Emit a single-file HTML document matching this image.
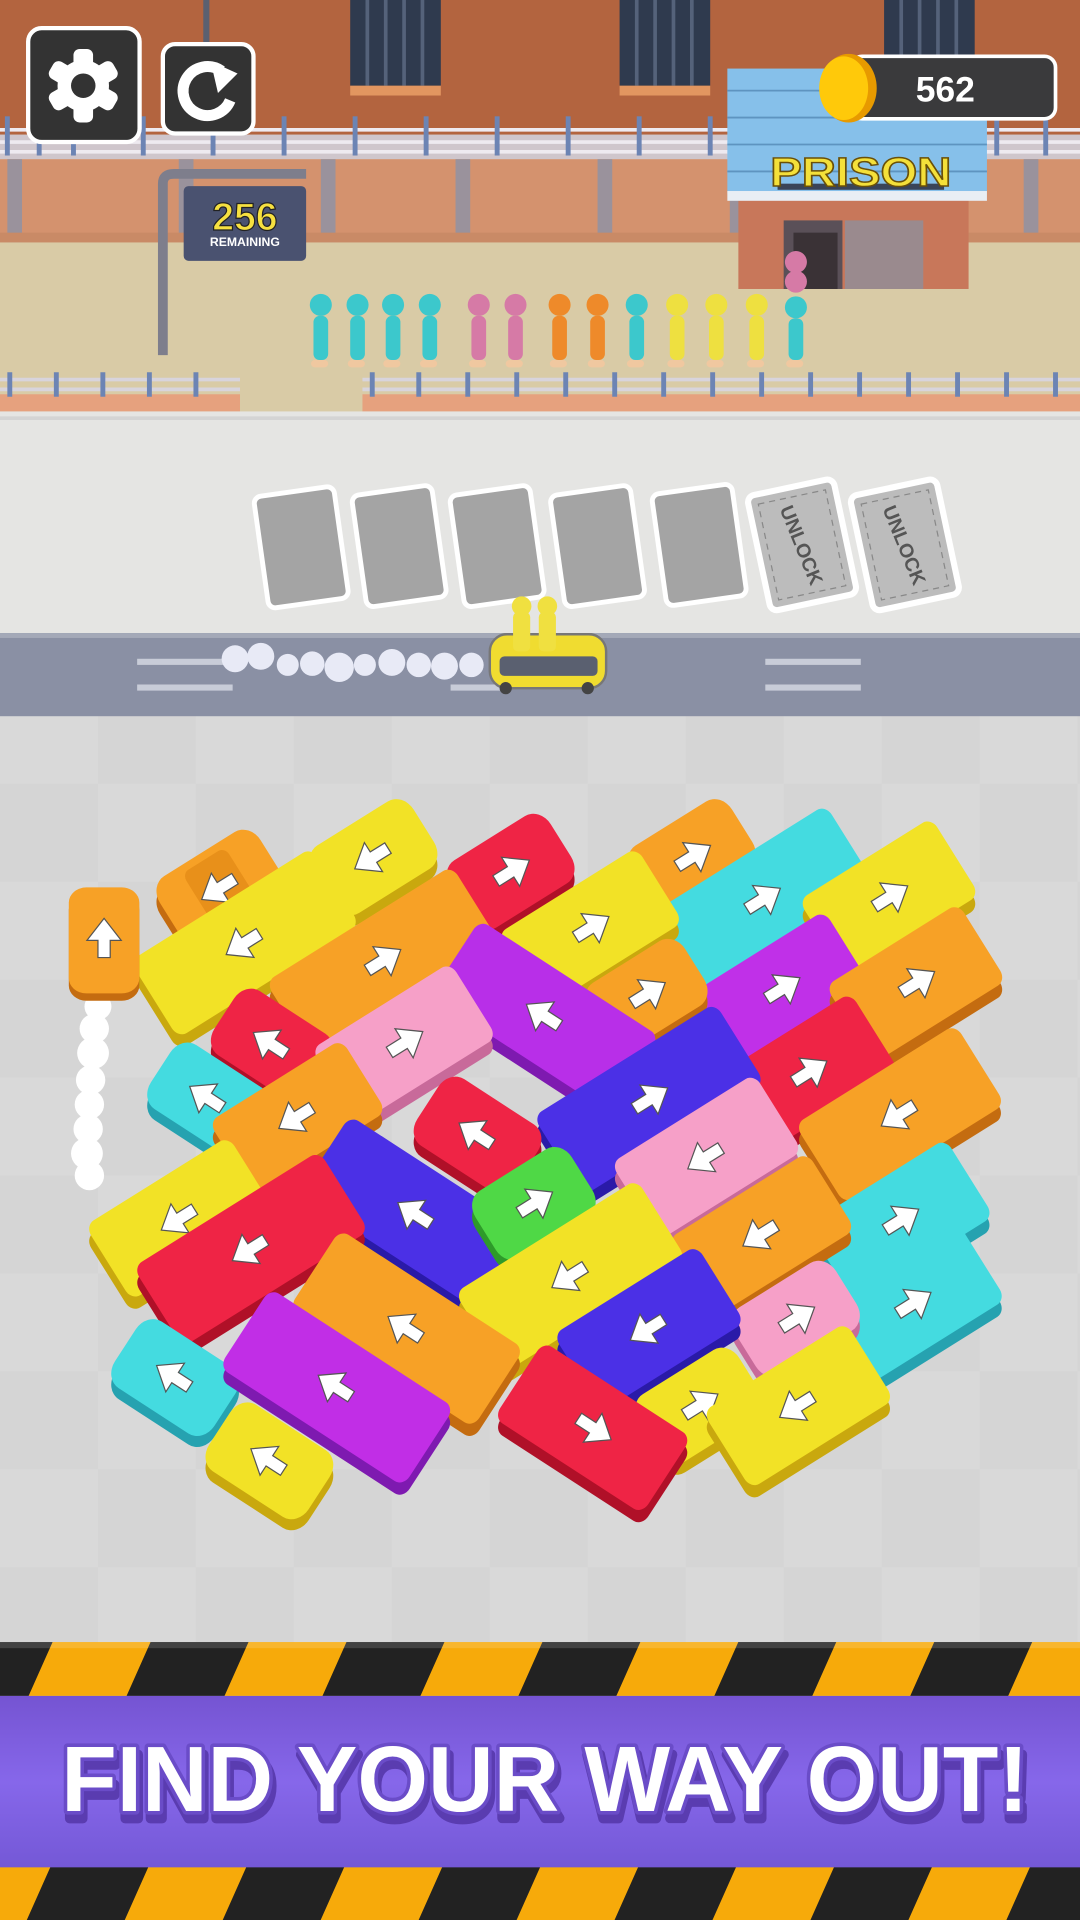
<!DOCTYPE html>
<html><head><meta charset="utf-8"><style>
html,body{margin:0;padding:0;width:1080px;height:1920px;overflow:hidden;background:#d8d8d8}
svg{display:block}
#cars rect{transform:scale(1.03,1.2)}
</style></head><body>
<svg width="1080" height="1920" viewBox="0 0 882 1568" preserveAspectRatio="none" xmlns="http://www.w3.org/2000/svg">
<defs>
<pattern id="haz" width="160" height="60" patternUnits="userSpaceOnUse" patternTransform="skewX(-24)">
<rect width="80" height="60" fill="#f7aa0a"/><rect x="80" width="80" height="60" fill="#222"/>
</pattern>
<pattern id="chk" width="160" height="160" patternUnits="userSpaceOnUse">
<rect width="160" height="160" fill="#d9d9d9"/><rect width="80" height="80" fill="#d5d5d5"/><rect x="80" y="80" width="80" height="80" fill="#d5d5d5"/>
</pattern>
<linearGradient id="pur" x1="0" y1="0" x2="0" y2="1"><stop offset="0" stop-color="#7554d2"/><stop offset="0.5" stop-color="#8667ea"/><stop offset="1" stop-color="#7458d6"/></linearGradient>
<path id="ar" d="M-14,-5h14v-9l18,14-18,14v-9h-14z" fill="#fff" stroke="#555" stroke-width="1"/>
</defs>

<rect x="0" y="0" width="882" height="110" fill="#b3643f"/>
<g fill="#2f3a4e"><rect x="286" y="0" width="74" height="70"/><rect x="506" y="0" width="74" height="70"/><rect x="722" y="0" width="74" height="70"/></g>
<g stroke="#55627a" stroke-width="3"><path d="M300,0v70M315,0v70M330,0v70M345,0v70M520,0v70M535,0v70M550,0v70M565,0v70M736,0v70M751,0v70M766,0v70M781,0v70"/></g>
<g fill="#e29660"><rect x="286" y="70" width="74" height="8"/><rect x="506" y="70" width="74" height="8"/><rect x="722" y="70" width="74" height="8"/></g>
<rect x="166" y="0" width="5" height="120" fill="#5a6070"/>
<rect x="0" y="110" width="882" height="20" fill="#cfc6cc"/>
<g stroke="#eeeaf0" stroke-width="3"><path d="M0,106H882M0,116H882M0,124H882"/></g>
<g fill="#6c84b4"><rect x="4" y="95" width="4" height="32"/><rect x="30" y="95" width="4" height="32"/><rect x="58" y="95" width="4" height="32"/><rect x="115" y="95" width="4" height="32"/><rect x="172" y="95" width="4" height="32"/><rect x="230" y="95" width="4" height="32"/><rect x="288" y="95" width="4" height="32"/><rect x="346" y="95" width="4" height="32"/><rect x="404" y="95" width="4" height="32"/><rect x="462" y="95" width="4" height="32"/><rect x="520" y="95" width="4" height="32"/><rect x="578" y="95" width="4" height="32"/><rect x="812" y="95" width="4" height="32"/><rect x="852" y="95" width="4" height="32"/></g>
<rect x="0" y="130" width="882" height="68" fill="#d4926e"/>
<g fill="#9a929c"><rect x="6" y="130" width="12" height="68"/><rect x="146" y="130" width="12" height="68"/><rect x="262" y="130" width="12" height="68"/><rect x="372" y="130" width="12" height="68"/><rect x="488" y="130" width="12" height="68"/><rect x="596" y="130" width="12" height="68"/><rect x="836" y="130" width="12" height="68"/></g>
<rect x="0" y="190" width="882" height="8" fill="#c98a66"/>
<rect x="0" y="198" width="882" height="145" fill="#d9cba6"/>
<rect x="603" y="160" width="188" height="76" fill="#c8775a"/>
<rect x="640" y="180" width="48" height="56" fill="#5a5058"/><rect x="648" y="190" width="36" height="46" fill="#3a3236"/>
<rect x="690" y="180" width="64" height="56" fill="#9a8a8e"/>
<rect x="594" y="56" width="212" height="102" fill="#86c0ea"/>
<g stroke="#5e94c0" stroke-width="1.5"><path d="M594,74H806M594,96H806M594,118H806M594,140H806"/></g>
<rect x="594" y="156" width="212" height="8" fill="#e8eef4"/>
<rect x="635" y="150" width="136" height="5" fill="#3a4458"/>
<text x="703" y="152" font-family="Liberation Sans, sans-serif" font-weight="bold" font-size="33" fill="#f4e03a" stroke="#6a5008" stroke-width="1.2" text-anchor="middle" textLength="148" lengthAdjust="spacingAndGlyphs">PRISON</text>
<path d="M133,290V150Q133,142 142,142H250" fill="none" stroke="#7e7e8c" stroke-width="8"/>
<rect x="150" y="152" width="100" height="61" rx="4" fill="#4a5270"/>
<text x="200" y="188" font-family="Liberation Sans, sans-serif" font-weight="bold" font-size="32" fill="#f6e040" stroke="#222" stroke-width="1" text-anchor="middle">256</text>
<text x="200" y="201" font-family="Liberation Sans, sans-serif" font-weight="bold" font-size="10" fill="#fff" text-anchor="middle">REMAINING</text>
<g>
<g fill="#3cc8cc"><circle cx="262" cy="249" r="9"/><rect x="256" y="258" width="12" height="36" rx="5"/><circle cx="292" cy="249" r="9"/><rect x="286" y="258" width="12" height="36" rx="5"/><circle cx="321" cy="249" r="9"/><rect x="315" y="258" width="12" height="36" rx="5"/><circle cx="351" cy="249" r="9"/><rect x="345" y="258" width="12" height="36" rx="5"/><circle cx="520" cy="249" r="9"/><rect x="514" y="258" width="12" height="36" rx="5"/><circle cx="650" cy="251" r="9"/><rect x="644" y="260" width="12" height="34" rx="5"/></g>
<g fill="#d67aa6"><circle cx="391" cy="249" r="9"/><rect x="385" y="258" width="12" height="36" rx="5"/><circle cx="421" cy="249" r="9"/><rect x="415" y="258" width="12" height="36" rx="5"/><circle cx="650" cy="214" r="9"/><circle cx="650" cy="230" r="9"/></g>
<g fill="#ee8a2a"><circle cx="457" cy="249" r="9"/><rect x="451" y="258" width="12" height="36" rx="5"/><circle cx="488" cy="249" r="9"/><rect x="482" y="258" width="12" height="36" rx="5"/></g>
<g fill="#eee040"><circle cx="553" cy="249" r="9"/><rect x="547" y="258" width="12" height="36" rx="5"/><circle cx="585" cy="249" r="9"/><rect x="579" y="258" width="12" height="36" rx="5"/><circle cx="618" cy="249" r="9"/><rect x="612" y="258" width="12" height="36" rx="5"/></g>
<g fill="#f0c8a0"><rect x="254" y="294" width="14" height="6" rx="3"/><rect x="284" y="294" width="14" height="6" rx="3"/><rect x="313" y="294" width="14" height="6" rx="3"/><rect x="343" y="294" width="14" height="6" rx="3"/><rect x="383" y="294" width="14" height="6" rx="3"/><rect x="413" y="294" width="14" height="6" rx="3"/><rect x="449" y="294" width="14" height="6" rx="3"/><rect x="480" y="294" width="14" height="6" rx="3"/><rect x="512" y="294" width="14" height="6" rx="3"/><rect x="545" y="294" width="14" height="6" rx="3"/><rect x="577" y="294" width="14" height="6" rx="3"/><rect x="610" y="294" width="14" height="6" rx="3"/><rect x="642" y="294" width="14" height="6" rx="3"/></g>
</g>
<g fill="#e6a17e"><rect x="0" y="322" width="196" height="14"/><rect x="296" y="322" width="586" height="14"/></g>
<g stroke="#d8d4dc" stroke-width="3"><path d="M0,310H196M0,318H196M296,310H882M296,318H882"/></g>
<g fill="#6c84b4"><rect x="6" y="304" width="4" height="20"/><rect x="44" y="304" width="4" height="20"/><rect x="82" y="304" width="4" height="20"/><rect x="120" y="304" width="4" height="20"/><rect x="158" y="304" width="4" height="20"/><rect x="302" y="304" width="4" height="20"/><rect x="340" y="304" width="4" height="20"/><rect x="380" y="304" width="4" height="20"/><rect x="420" y="304" width="4" height="20"/><rect x="460" y="304" width="4" height="20"/><rect x="500" y="304" width="4" height="20"/><rect x="540" y="304" width="4" height="20"/><rect x="580" y="304" width="4" height="20"/><rect x="620" y="304" width="4" height="20"/><rect x="660" y="304" width="4" height="20"/><rect x="700" y="304" width="4" height="20"/><rect x="740" y="304" width="4" height="20"/><rect x="780" y="304" width="4" height="20"/><rect x="820" y="304" width="4" height="20"/><rect x="860" y="304" width="4" height="20"/></g>
<rect x="0" y="336" width="882" height="182" fill="#e5e5e3"/>
<rect x="0" y="340" width="882" height="3" fill="#d4d4d4"/>
<g stroke="#fff" stroke-width="4" fill="#a4a4a4">
<rect x="-33" y="-46" width="66" height="92" rx="6" transform="translate(246,447) rotate(-8)"/>
<rect x="-33" y="-46" width="66" height="92" rx="6" transform="translate(326,446) rotate(-8)"/>
<rect x="-33" y="-46" width="66" height="92" rx="6" transform="translate(406,446) rotate(-8)"/>
<rect x="-33" y="-46" width="66" height="92" rx="6" transform="translate(488,446) rotate(-8)"/>
<rect x="-33" y="-46" width="66" height="92" rx="6" transform="translate(571,445) rotate(-8)"/>
</g>
<g transform="translate(655,445) rotate(-12)"><rect x="-36" y="-48" width="72" height="96" rx="6" fill="#bcbcbc" stroke="#fff" stroke-width="5"/><rect x="-28" y="-40" width="56" height="80" fill="none" stroke="#888" stroke-dasharray="5 4"/><text transform="rotate(80)" x="0" y="6" font-family="Liberation Sans, sans-serif" font-weight="bold" font-size="16" fill="#555" text-anchor="middle">UNLOCK</text></g>
<g transform="translate(739,445) rotate(-12)"><rect x="-36" y="-48" width="72" height="96" rx="6" fill="#bcbcbc" stroke="#fff" stroke-width="5"/><rect x="-28" y="-40" width="56" height="80" fill="none" stroke="#888" stroke-dasharray="5 4"/><text transform="rotate(80)" x="0" y="6" font-family="Liberation Sans, sans-serif" font-weight="bold" font-size="16" fill="#555" text-anchor="middle">UNLOCK</text></g>
<rect x="0" y="517" width="882" height="68" fill="#8a90a4"/>
<rect x="0" y="517" width="882" height="4" fill="#a4a9b8"/>
<g fill="#c8ccd8"><rect x="112" y="538" width="78" height="5"/><rect x="112" y="559" width="78" height="5"/><rect x="368" y="559" width="48" height="5"/><rect x="625" y="538" width="78" height="5"/><rect x="625" y="559" width="78" height="5"/></g>
<g fill="#e8eaf6"><circle cx="192" cy="538" r="11"/><circle cx="213" cy="536" r="11"/><circle cx="235" cy="543" r="9"/><circle cx="255" cy="542" r="10"/><circle cx="277" cy="545" r="12"/><circle cx="298" cy="543" r="9"/><circle cx="320" cy="541" r="11"/><circle cx="342" cy="543" r="10"/><circle cx="363" cy="544" r="11"/><circle cx="385" cy="543" r="10"/></g>
<rect x="0" y="585" width="882" height="757" fill="url(#chk)"/>
<rect x="400" y="518" width="95" height="44" rx="14" fill="#f0dc30" stroke="#777" stroke-width="2"/>
<rect x="408" y="536" width="80" height="16" rx="4" fill="#5a6070"/>
<g fill="#f0e040"><circle cx="426" cy="495" r="8"/><circle cx="447" cy="495" r="8"/><rect x="419" y="500" width="14" height="32" rx="4"/><rect x="440" y="500" width="14" height="32" rx="4"/></g>
<circle cx="413" cy="562" r="5" fill="#444"/><circle cx="480" cy="562" r="5" fill="#444"/>

<g fill="#fff"><circle cx="80" cy="822" r="11"/><circle cx="77" cy="840" r="12"/><circle cx="76" cy="860" r="13"/><circle cx="74" cy="882" r="12"/><circle cx="73" cy="902" r="12"/><circle cx="72" cy="922" r="12"/><circle cx="71" cy="942" r="13"/><circle cx="73" cy="960" r="12"/></g>

<g id="cars">
<g transform="translate(180,725)"><g transform="translate(0,9) rotate(-32)"><rect x="-47" y="-27" width="94" height="54" rx="14" fill="#c46c10"/></g><g transform="rotate(-32)"><rect x="-47" y="-27" width="94" height="54" rx="14" fill="#f7a126"/><rect x="-20" y="-22" width="40" height="44" rx="6" fill="#e8901a"/><use href="#ar" transform="scale(-1,1)"/></g></g>
<g transform="translate(305,700)"><g transform="translate(0,9) rotate(-32)"><rect x="-47" y="-27" width="94" height="54" rx="14" fill="#c9a80e"/></g><g transform="rotate(-32)"><rect x="-47" y="-27" width="94" height="54" rx="14" fill="#f2e226"/><use href="#ar" transform="scale(-1,1)"/></g></g>
<g transform="translate(417,712)"><g transform="translate(0,9) rotate(-32)"><rect x="-47" y="-27" width="94" height="54" rx="14" fill="#b01028"/></g><g transform="rotate(-32)"><rect x="-47" y="-27" width="94" height="54" rx="14" fill="#ef2445"/><use href="#ar"/></g></g>
<g transform="translate(565,700)"><g transform="translate(0,9) rotate(-32)"><rect x="-47" y="-27" width="94" height="54" rx="14" fill="#c46c10"/></g><g transform="rotate(-32)"><rect x="-47" y="-27" width="94" height="54" rx="14" fill="#f7a126"/><use href="#ar"/></g></g>
<g transform="translate(622,735)"><g transform="translate(0,10) rotate(-32)"><rect x="-83" y="-32" width="166" height="64" rx="8" fill="#26a2b0"/></g><g transform="rotate(-32)"><rect x="-83" y="-32" width="166" height="64" rx="8" fill="#44dbe0"/><use href="#ar"/></g></g>
<g transform="translate(726,733)"><g transform="translate(0,10) rotate(-32)"><rect x="-62" y="-31" width="124" height="62" rx="8" fill="#c9a80e"/></g><g transform="rotate(-32)"><rect x="-62" y="-31" width="124" height="62" rx="8" fill="#f2e226"/><use href="#ar"/></g></g>
<g transform="translate(200,770)"><g transform="translate(0,10) rotate(-32)"><rect x="-85" y="-31" width="170" height="62" rx="8" fill="#c9a80e"/></g><g transform="rotate(-32)"><rect x="-85" y="-31" width="170" height="62" rx="8" fill="#f2e226"/><use href="#ar" transform="scale(-1,1)"/></g></g>
<g transform="translate(312,785)"><g transform="translate(0,10) rotate(-32)"><rect x="-87" y="-30" width="174" height="60" rx="8" fill="#c46c10"/></g><g transform="rotate(-32)"><rect x="-87" y="-30" width="174" height="60" rx="8" fill="#f7a126"/><use href="#ar"/></g></g>
<g transform="translate(482,758)"><g transform="translate(0,10) rotate(-32)"><rect x="-65" y="-30" width="130" height="60" rx="8" fill="#c9a80e"/></g><g transform="rotate(-32)"><rect x="-65" y="-30" width="130" height="60" rx="8" fill="#f2e226"/><use href="#ar"/></g></g>
<g transform="translate(85,768)"><g transform="translate(0,6) rotate(-90)"><rect x="-42" y="-24" width="84" height="48" rx="12" fill="#c46c10"/></g><g transform="rotate(-90)"><rect x="-42" y="-24" width="84" height="48" rx="12" fill="#f7a126"/><use href="#ar"/></g></g>
<g transform="translate(638,808)"><g transform="translate(0,10) rotate(-32)"><rect x="-62" y="-30" width="124" height="60" rx="8" fill="#7e1ab0"/></g><g transform="rotate(-32)"><rect x="-62" y="-30" width="124" height="60" rx="8" fill="#c030e8"/><use href="#ar"/></g></g>
<g transform="translate(748,803)"><g transform="translate(0,10) rotate(-32)"><rect x="-62" y="-31" width="124" height="62" rx="8" fill="#c46c10"/></g><g transform="rotate(-32)"><rect x="-62" y="-31" width="124" height="62" rx="8" fill="#f7a126"/><use href="#ar"/></g></g>
<g transform="translate(528,812)"><g transform="translate(0,9) rotate(-32)"><rect x="-45" y="-26" width="90" height="52" rx="14" fill="#c46c10"/></g><g transform="rotate(-32)"><rect x="-45" y="-26" width="90" height="52" rx="14" fill="#f7a126"/><use href="#ar"/></g></g>
<g transform="translate(445,830)"><g transform="translate(0,10) rotate(33)"><rect x="-85" y="-31" width="170" height="62" rx="8" fill="#7e1ab0"/></g><g transform="rotate(33)"><rect x="-85" y="-31" width="170" height="62" rx="8" fill="#b82fe8"/><use href="#ar" transform="scale(-1,1)"/></g></g>
<g transform="translate(222,853)"><g transform="translate(0,9) rotate(33)"><rect x="-45" y="-26" width="90" height="52" rx="14" fill="#b01028"/></g><g transform="rotate(33)"><rect x="-45" y="-26" width="90" height="52" rx="14" fill="#ef2445"/><use href="#ar" transform="scale(-1,1)"/></g></g>
<g transform="translate(330,852)"><g transform="translate(0,10) rotate(-32)"><rect x="-65" y="-30" width="130" height="60" rx="8" fill="#c86a9a"/></g><g transform="rotate(-32)"><rect x="-65" y="-30" width="130" height="60" rx="8" fill="#f6a0c8"/><use href="#ar"/></g></g>
<g transform="translate(170,897)"><g transform="translate(0,9) rotate(33)"><rect x="-45" y="-26" width="90" height="52" rx="14" fill="#26a2b0"/></g><g transform="rotate(33)"><rect x="-45" y="-26" width="90" height="52" rx="14" fill="#44dbe0"/><use href="#ar" transform="scale(-1,1)"/></g></g>
<g transform="translate(660,876)"><g transform="translate(0,10) rotate(-32)"><rect x="-62" y="-31" width="124" height="62" rx="8" fill="#b01028"/></g><g transform="rotate(-32)"><rect x="-62" y="-31" width="124" height="62" rx="8" fill="#ef2445"/><use href="#ar"/></g></g>
<g transform="translate(530,898)"><g transform="translate(0,10) rotate(-32)"><rect x="-85" y="-32" width="170" height="64" rx="8" fill="#2a1aa8"/></g><g transform="rotate(-32)"><rect x="-85" y="-32" width="170" height="64" rx="8" fill="#4b30e6"/><use href="#ar"/></g></g>
<g transform="translate(735,910)"><g transform="translate(0,10) rotate(-32)"><rect x="-75" y="-32" width="150" height="64" rx="8" fill="#c46c10"/></g><g transform="rotate(-32)"><rect x="-75" y="-32" width="150" height="64" rx="8" fill="#f7a126"/><use href="#ar" transform="scale(-1,1)"/></g></g>
<g transform="translate(243,912)"><g transform="translate(0,10) rotate(-32)"><rect x="-62" y="-29" width="124" height="58" rx="8" fill="#c46c10"/></g><g transform="rotate(-32)"><rect x="-62" y="-29" width="124" height="58" rx="8" fill="#f7a126"/><use href="#ar" transform="scale(-1,1)"/></g></g>
<g transform="translate(390,927)"><g transform="translate(0,9) rotate(33)"><rect x="-47" y="-27" width="94" height="54" rx="14" fill="#b01028"/></g><g transform="rotate(33)"><rect x="-47" y="-27" width="94" height="54" rx="14" fill="#ef2445"/><use href="#ar" transform="scale(-1,1)"/></g></g>
<g transform="translate(577,945)"><g transform="translate(0,10) rotate(-32)"><rect x="-67" y="-31" width="134" height="62" rx="8" fill="#c86a9a"/></g><g transform="rotate(-32)"><rect x="-67" y="-31" width="134" height="62" rx="8" fill="#f6a0c8"/><use href="#ar" transform="scale(-1,1)"/></g></g>
<g transform="translate(340,992)"><g transform="translate(0,10) rotate(33)"><rect x="-87" y="-32" width="174" height="64" rx="8" fill="#2a1aa8"/></g><g transform="rotate(33)"><rect x="-87" y="-32" width="174" height="64" rx="8" fill="#4b30e6"/><use href="#ar" transform="scale(-1,1)"/></g></g>
<g transform="translate(436,983)"><g transform="translate(0,9) rotate(-32)"><rect x="-45" y="-27" width="90" height="54" rx="14" fill="#2e9a2a"/></g><g transform="rotate(-32)"><rect x="-45" y="-27" width="90" height="54" rx="14" fill="#4fd846"/><use href="#ar"/></g></g>
<g transform="translate(147,995)"><g transform="translate(0,10) rotate(-32)"><rect x="-67" y="-30" width="134" height="60" rx="8" fill="#c9a80e"/></g><g transform="rotate(-32)"><rect x="-67" y="-30" width="134" height="60" rx="8" fill="#f2e226"/><use href="#ar" transform="scale(-1,1)"/></g></g>
<g transform="translate(735,997)"><g transform="translate(0,10) rotate(-32)"><rect x="-65" y="-31" width="130" height="62" rx="8" fill="#26a2b0"/></g><g transform="rotate(-32)"><rect x="-65" y="-31" width="130" height="62" rx="8" fill="#44dbe0"/><use href="#ar"/></g></g>
<g transform="translate(622,1008)"><g transform="translate(0,10) rotate(-32)"><rect x="-65" y="-31" width="130" height="62" rx="8" fill="#c46c10"/></g><g transform="rotate(-32)"><rect x="-65" y="-31" width="130" height="62" rx="8" fill="#f7a126"/><use href="#ar" transform="scale(-1,1)"/></g></g>
<g transform="translate(205,1020)"><g transform="translate(0,10) rotate(-32)"><rect x="-87" y="-32" width="174" height="64" rx="8" fill="#b01028"/></g><g transform="rotate(-32)"><rect x="-87" y="-32" width="174" height="64" rx="8" fill="#ef2445"/><use href="#ar" transform="scale(-1,1)"/></g></g>
<g transform="translate(466,1042)"><g transform="translate(0,10) rotate(-32)"><rect x="-85" y="-32" width="170" height="64" rx="8" fill="#c9a80e"/></g><g transform="rotate(-32)"><rect x="-85" y="-32" width="170" height="64" rx="8" fill="#f2e226"/><use href="#ar" transform="scale(-1,1)"/></g></g>
<g transform="translate(745,1065)"><g transform="translate(0,10) rotate(-32)"><rect x="-65" y="-31" width="130" height="62" rx="8" fill="#26a2b0"/></g><g transform="rotate(-32)"><rect x="-65" y="-31" width="130" height="62" rx="8" fill="#44dbe0"/><use href="#ar"/></g></g>
<g transform="translate(650,1077)"><g transform="translate(0,9) rotate(-32)"><rect x="-47" y="-27" width="94" height="54" rx="14" fill="#c86a9a"/></g><g transform="rotate(-32)"><rect x="-47" y="-27" width="94" height="54" rx="14" fill="#f6a0c8"/><use href="#ar"/></g></g>
<g transform="translate(332,1085)"><g transform="translate(0,10) rotate(33)"><rect x="-87" y="-32" width="174" height="64" rx="8" fill="#c46c10"/></g><g transform="rotate(33)"><rect x="-87" y="-32" width="174" height="64" rx="8" fill="#f7a126"/><use href="#ar" transform="scale(-1,1)"/></g></g>
<g transform="translate(530,1085)"><g transform="translate(0,10) rotate(-32)"><rect x="-67" y="-31" width="134" height="62" rx="8" fill="#2a1aa8"/></g><g transform="rotate(-32)"><rect x="-67" y="-31" width="134" height="62" rx="8" fill="#4b30e6"/><use href="#ar" transform="scale(-1,1)"/></g></g>
<g transform="translate(143,1125)"><g transform="translate(0,9) rotate(33)"><rect x="-47" y="-27" width="94" height="54" rx="14" fill="#26a2b0"/></g><g transform="rotate(33)"><rect x="-47" y="-27" width="94" height="54" rx="14" fill="#44dbe0"/><use href="#ar" transform="scale(-1,1)"/></g></g>
<g transform="translate(275,1133)"><g transform="translate(0,10) rotate(33)"><rect x="-87" y="-32" width="174" height="64" rx="8" fill="#7e1ab0"/></g><g transform="rotate(33)"><rect x="-87" y="-32" width="174" height="64" rx="8" fill="#c12ee6"/><use href="#ar" transform="scale(-1,1)"/></g></g>
<g transform="translate(571,1148)"><g transform="translate(0,9) rotate(-32)"><rect x="-47" y="-27" width="94" height="54" rx="14" fill="#c9a80e"/></g><g transform="rotate(-32)"><rect x="-47" y="-27" width="94" height="54" rx="14" fill="#f2e226"/><use href="#ar"/></g></g>
<g transform="translate(652,1148)"><g transform="translate(0,10) rotate(-32)"><rect x="-67" y="-31" width="134" height="62" rx="8" fill="#c9a80e"/></g><g transform="rotate(-32)"><rect x="-67" y="-31" width="134" height="62" rx="8" fill="#f2e226"/><use href="#ar" transform="scale(-1,1)"/></g></g>
<g transform="translate(484,1166)"><g transform="translate(0,10) rotate(33)"><rect x="-70" y="-31" width="140" height="62" rx="8" fill="#b01028"/></g><g transform="rotate(33)"><rect x="-70" y="-31" width="140" height="62" rx="8" fill="#ef2445"/><use href="#ar"/></g></g>
<g transform="translate(220,1193)"><g transform="translate(0,9) rotate(33)"><rect x="-47" y="-27" width="94" height="54" rx="14" fill="#c9a80e"/></g><g transform="rotate(33)"><rect x="-47" y="-27" width="94" height="54" rx="14" fill="#f2e226"/><use href="#ar" transform="scale(-1,1)"/></g></g>
</g>

<rect x="23" y="23" width="91" height="93" rx="11" fill="#333" stroke="#fff" stroke-width="3.5"/>
<g transform="translate(68,70)" fill="#fff">
<circle r="21"/>
<g><rect x="-8" y="-30" width="16" height="16" rx="5"/><rect x="-8" y="-30" width="16" height="16" rx="5" transform="rotate(60)"/><rect x="-8" y="-30" width="16" height="16" rx="5" transform="rotate(120)"/><rect x="-8" y="-30" width="16" height="16" rx="5" transform="rotate(180)"/><rect x="-8" y="-30" width="16" height="16" rx="5" transform="rotate(240)"/><rect x="-8" y="-30" width="16" height="16" rx="5" transform="rotate(300)"/></g>
<circle r="10" fill="#333"/>
</g>
<rect x="133" y="36" width="74" height="73" rx="10" fill="#333" stroke="#fff" stroke-width="3.5"/>
<path d="M188,82A20,20 0 1 1 181,58" fill="none" stroke="#fff" stroke-width="9"/>
<path d="M172,50L194,60L178,76Z" fill="#fff"/>
<rect x="695" y="46" width="167" height="51" rx="9" fill="#3a3a3c" stroke="#fff" stroke-width="3"/>
<ellipse cx="693" cy="72" rx="23" ry="28" fill="#e79a00"/>
<ellipse cx="689" cy="72" rx="20" ry="26" fill="#ffc90a"/>
<text x="772" y="83" font-family="Liberation Sans, sans-serif" font-weight="bold" font-size="29" fill="#fff" text-anchor="middle">562</text>

<rect x="0" y="1341" width="882" height="44" fill="url(#haz)"/>
<rect x="0" y="1341" width="882" height="5" fill="#fff" opacity="0.15"/>
<rect x="0" y="1385" width="882" height="141" fill="url(#pur)"/>
<rect x="0" y="1525" width="882" height="43" fill="url(#haz)"/>
<text x="447" y="1485" font-family="Liberation Sans, sans-serif" font-weight="bold" font-size="76" fill="#5a3cb0" text-anchor="middle" textLength="790" lengthAdjust="spacingAndGlyphs" stroke="#5a3cb0" stroke-width="8" stroke-linejoin="round">FIND YOUR WAY OUT!</text>
<text x="445" y="1479" font-family="Liberation Sans, sans-serif" font-weight="bold" font-size="76" fill="#fff" text-anchor="middle" textLength="790" lengthAdjust="spacingAndGlyphs" stroke="#6a4cc8" stroke-width="6" stroke-linejoin="round" paint-order="stroke">FIND YOUR WAY OUT!</text>
</svg>
</body></html>
